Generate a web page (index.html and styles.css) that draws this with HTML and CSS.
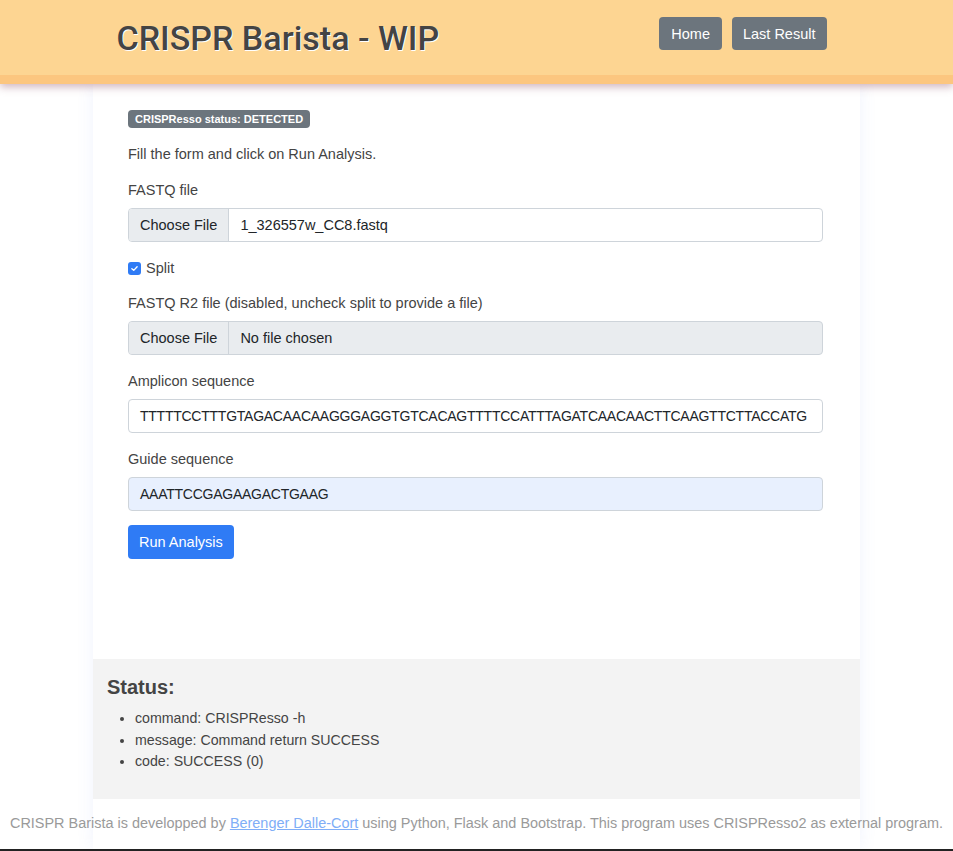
FILE: index.html
```html
<!DOCTYPE html>
<html>
<head>
<meta charset="utf-8">
<link rel="stylesheet" href="styles.css">
</head>
<body>
<header class="topbar">
  <div class="topbar-inner">
    <h1 class="brand">CRISPR Barista - WIP</h1>
    <nav class="nav">
      <a class="btn btn-gray" href="#">Home</a>
      <a class="btn btn-gray" href="#">Last Result</a>
    </nav>
  </div>
</header>
<div class="shell">
  <main class="page">
    <section class="form-area">
      <span class="badge">CRISPResso status: DETECTED</span>
      <p class="intro">Fill the form and click on Run Analysis.</p>
      <div class="field">
        <label class="label">FASTQ file</label>
        <div class="file-input">
          <span class="file-btn">Choose File</span>
          <span class="file-name">1_326557w_CC8.fastq</span>
        </div>
      </div>
      <div class="check">
        <span class="checkbox"><svg viewBox="0 0 12 12" width="9" height="9"><path d="M2.5 6.2 L5 8.5 L9.5 3.6" fill="none" stroke="#fff" stroke-width="1.8" stroke-linecap="round" stroke-linejoin="round"/></svg></span>
        <span class="check-label">Split</span>
      </div>
      <div class="field">
        <label class="label">FASTQ R2 file (disabled, uncheck split to provide a file)</label>
        <div class="file-input disabled">
          <span class="file-btn">Choose File</span>
          <span class="file-name">No file chosen</span>
        </div>
      </div>
      <div class="field">
        <label class="label">Amplicon sequence</label>
        <div class="text-input seq">TTTTTCCTTTGTAGACAACAAGGGAGGTGTCACAGTTTTCCATTTAGATCAACAACTTCAAGTTCTTACCATG</div>
      </div>
      <div class="field last">
        <label class="label">Guide sequence</label>
        <div class="text-input seq autofill">AAATTCCGAGAAGACTGAAG</div>
      </div>
      <a class="btn btn-blue" href="#">Run Analysis</a>
    </section>
    <section class="status">
      <h2 class="status-title">Status:</h2>
      <ul class="status-list">
        <li>command: CRISPResso -h</li>
        <li>message: Command return SUCCESS</li>
        <li>code: SUCCESS (0)</li>
      </ul>
    </section>
  </main>
  <footer class="footer">
    CRISPR Barista is developped by <a href="#">Berenger Dalle-Cort</a> using Python, Flask and Bootstrap. This program uses CRISPResso2 as external program.
  </footer>
</div>
<div class="bottom-line"></div>
</body>
</html>
```

FILE: styles.css
```css
* { box-sizing: border-box; }
html, body { margin: 0; padding: 0; }
body {
  font-family: "Liberation Sans", Arial, sans-serif;
  font-size: 14.5px;
  color: #444;
  background: #fff;
  width: 953px;
  height: 851px;
  overflow: hidden;
  position: relative;
}
.topbar {
  background: #fdd592;
  border-bottom: 9px solid #fcc67f;
  box-shadow: 0 3px 8px rgba(150, 90, 110, 0.45);
  height: 84px;
  position: relative;
  z-index: 2;
}
.topbar-inner {
  width: 720px;
  margin: 0 auto;
  padding: 0 10px 0 0;
  height: 75px;
  display: flex;
  align-items: center;
  justify-content: space-between;
}
.brand {
  margin: 0;
  font-family: Roboto, "Liberation Sans", sans-serif;
  font-size: 34px;
  font-weight: 500;
  color: #444;
  text-shadow: 1px 1px 0 #fff;
}
.nav {
  display: flex;
  gap: 10px;
  margin-top: -8px;
}
.btn {
  display: inline-block;
  color: #fff;
  text-decoration: none;
  border-radius: 4px;
  font-size: 14.5px;
  line-height: 20px;
  padding: 7px 12px 6px;
  white-space: nowrap;
}
.btn-gray { background: #6c757d; }
.btn-gray + .btn-gray { padding: 7px 11px 6px; }
.btn-blue { background: #2f7bf5; padding: 7px 11px 7px; }
.shell {
  width: 767px;
  margin: 0 auto;
  height: 765px;
  background: #fff;
  box-shadow: 0 0 16px rgba(110, 140, 240, 0.10);
}
.page {
  background: #fff;
}
.form-area {
  padding: 26px 35px 0;
  height: 575px;
}
.badge {
  display: inline-block;
  background: #6c757d;
  color: #fff;
  font-weight: 700;
  font-size: 11px;
  line-height: 18px;
  padding: 0 7px;
  border-radius: 4px;
}
.intro {
  margin: 16px 0 16px;
  line-height: 20px;
}
.field { margin-bottom: 16px; }
.field.last { margin-bottom: 14px; }
.label {
  display: block;
  line-height: 20px;
  margin-bottom: 8px;
}
.file-input, .text-input {
  width: 695px;
  height: 34px;
  border: 1px solid #ced4da;
  border-radius: 4px;
  display: flex;
  align-items: center;
  overflow: hidden;
  color: #212529;
  font-size: 14.5px;
  background: #fff;
  white-space: nowrap;
}
.file-input.disabled { background: #e9ecef; }
.file-btn {
  flex: 0 0 99px;
  background: #e9ecef;
  height: 100%;
  display: flex;
  align-items: center;
  padding: 0 11px;
  border-right: 1px solid #ced4da;
  white-space: nowrap;
}
.file-name { padding-left: 11px; }
.text-input { padding-left: 11px; }
.text-input.seq { font-size: 14px; letter-spacing: -0.25px; }
.text-input.autofill { background: #e8f0fe; }
.check {
  display: flex;
  align-items: center;
  gap: 5px;
  margin: 0 0 15px;
  line-height: 20px;
}
.checkbox {
  width: 13px;
  height: 13px;
  border-radius: 3px;
  background: #2f7bf5;
  display: flex;
  align-items: center;
  justify-content: center;
}
.status {
  background: #f3f3f3;
  padding: 16px 14px 0;
  height: 140px;
}
.status-title {
  margin: 0 0 9px;
  font-size: 20px;
  font-weight: 700;
  line-height: 24px;
  color: #444;
}
.status-list {
  margin: 0;
  padding-left: 28px;
  font-size: 14.2px;
  line-height: 21.5px;
}
.footer {
  margin: 0 -93px;
  text-align: center;
  color: #9a9a9a;
  font-size: 14.45px;
  padding: 16px 0 0;
  white-space: nowrap;
}
.footer a { color: #80aef7; }
.bottom-line {
  position: absolute;
  left: 0;
  right: 0;
  bottom: 0;
  height: 2px;
  background: #222;
}
```
